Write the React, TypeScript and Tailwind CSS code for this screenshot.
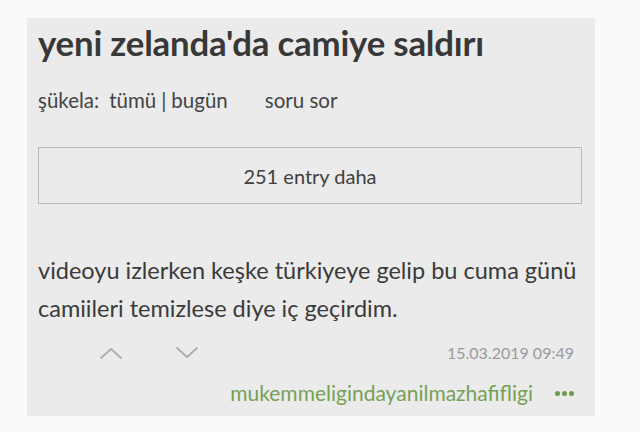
function Chevron({ up }: { up?: boolean }) {
  return (
    <svg width="22" height="12" viewBox="0 0 22 12" fill="none" stroke="#acacac" strokeWidth={1.8} strokeLinecap="round" strokeLinejoin="round">
      <polyline points={up ? '1,11 11,2 21,11' : '1,1 11,10 21,1'} />
    </svg>
  );
}

export default function App() {
  return (
    <div className="w-[640px] h-[432px] bg-[#fafafa] pt-[18px] pl-[27px] font-['Lato',sans-serif]">
      <div className="w-[568px] h-[398px] bg-[#ebebeb] px-[11px] pt-[5px]">
        <h1 className="text-[34.8px] leading-[40px] font-bold text-[#383838] tracking-[-0.2px]">
          yeni zelanda'da camiye saldırı
        </h1>

        <div className="mt-[25px] flex items-center text-[20.5px] leading-[24px] text-[#444]">
          <span>şükela:</span>
          <span className="ml-[10px]">tümü</span>
          <span className="mx-[5px]">|</span>
          <span>bugün</span>
          <span className="ml-[37px]">soru sor</span>
        </div>

        <div className="mt-[35px] w-[544px] h-[57px] border border-[#b9b9b9] flex items-center justify-center text-[20px] text-[#3f3f3f]">
          251 entry daha
        </div>

        <p className="mt-[47px] text-[23.5px] leading-[38px] text-[#3a3a3a] w-[546px]">
          videoyu izlerken keşke türkiyeye gelip bu cuma günü camiileri temizlese diye iç geçirdim.
        </p>

        <div className="mt-[14px] flex items-center h-[24px] pr-[10px]">
          <span className="ml-[62px]"><Chevron up /></span>
          <span className="ml-[54px]"><Chevron /></span>
          <span className="ml-auto text-[16px] text-[#9a9a9a]">15.03.2019 09:49</span>
        </div>

        <div className="mt-[15px] flex items-center justify-end h-[26px] pr-[10px] text-[21px]">
          <span className="text-[#76a055]">mukemmeligindayanilmazhafifligi</span>
          <span className="ml-[22px] flex gap-[2px]">
            <span className="w-[5px] h-[5px] rounded-full bg-[#6f9a4f]" />
            <span className="w-[5px] h-[5px] rounded-full bg-[#6f9a4f]" />
            <span className="w-[5px] h-[5px] rounded-full bg-[#6f9a4f]" />
          </span>
        </div>
      </div>
    </div>
  );
}
